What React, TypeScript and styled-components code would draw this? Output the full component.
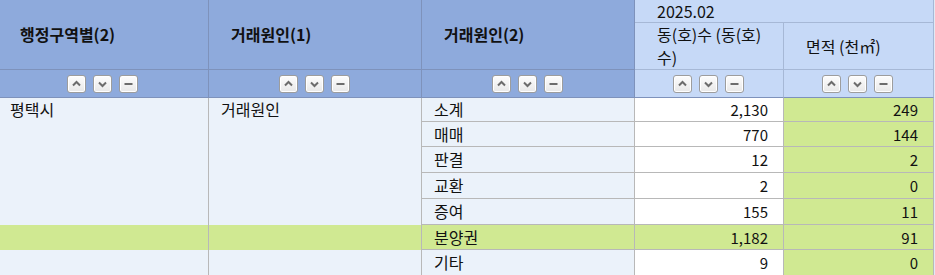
import { FC, Fragment } from "react";
import styled, { createGlobalStyle } from "styled-components";

const Colors = {
  headDark: "#8eaadc",
  headLight: "#c6d9f7",
  headLineDark: "#7e92bb",
  headLineLight: "#a6b8d6",
  bodyLight: "#ebf2fa",
  green: "#d0e992",
  white: "#ffffff",
  grid: "#b8b8b8",
  text: "#111111",
};

const GlobalStyle = createGlobalStyle`
  html, body {
    margin: 0;
    padding: 0;
    background: #e2e9f4;
    overflow: hidden;
  }
  body {
    font-family: "Noto Sans CJK KR", "Noto Sans", sans-serif;
  }
`;

const Table = styled.div`
  display: grid;
  grid-template-columns: 211px 213px 213px 149px 150px;
  grid-template-rows: 23px 47px 28px 24px 25px 26px 26px 26px 25px 26px;
  width: 936px;
  margin-left: -2px;
  font-size: 16px;
  color: ${Colors.text};
`;

const TitleCell = styled.div`
  grid-row: span 2;
  display: flex;
  align-items: center;
  padding-left: 22px;
  font-weight: 700;
  line-height: 19px;
  background: ${Colors.headDark};
  border-right: 1px solid ${Colors.headLineDark};
  border-bottom: 1px solid ${Colors.headLineDark};
`;

const PeriodCell = styled.div`
  grid-column: span 2;
  display: flex;
  align-items: center;
  padding-left: 22px;
  line-height: 19px;
  background: ${Colors.headLight};
  border-right: 1px solid ${Colors.headLineLight};
  border-bottom: 1px solid ${Colors.headLineLight};
`;

const MeasureCell = styled.div`
  display: flex;
  align-items: center;
  padding: 0 2px 0 22px;
  line-height: 23px;
  white-space: nowrap;
  background: ${Colors.headLight};
  border-right: 1px solid ${Colors.headLineLight};
  border-bottom: 1px solid ${Colors.headLineLight};
`;

const SortCell = styled.div<{ $light?: boolean }>`
  display: flex;
  align-items: center;
  justify-content: center;
  gap: 7px;
  padding-right: 2px;
  background: ${(p) => (p.$light ? Colors.headLight : Colors.headDark)};
  border-right: 1px solid ${(p) => (p.$light ? Colors.headLineLight : Colors.headLineDark)};
  border-bottom: 1px solid ${Colors.headLineDark};
`;

const SortButton = styled.button`
  width: 19px;
  height: 18px;
  padding: 0;
  display: flex;
  align-items: center;
  justify-content: center;
  border: 1px solid #9d9d9d;
  border-radius: 3px;
  background: linear-gradient(#fdfdfd, #e8e8e8);
  box-shadow: inset 0 0 0 1px #ffffff;
  color: #6c6c6c;
  cursor: pointer;
`;

const GroupCell = styled.div<{ $rows?: number; $hl?: boolean }>`
  grid-row: span ${(p) => p.$rows ?? 1};
  padding: 0 12px;
  line-height: 23px;
  background: ${(p) => (p.$hl ? Colors.green : Colors.bodyLight)};
  border-right: 1px solid ${Colors.grid};
`;

const LabelCell = styled.div<{ $hl?: boolean }>`
  display: flex;
  align-items: center;
  padding: 0 12px;
  line-height: 19px;
  background: ${(p) => (p.$hl ? Colors.green : Colors.bodyLight)};
  border-right: 1px solid ${Colors.grid};
  border-bottom: 1px solid ${Colors.grid};
`;

const NumCell = styled.div<{ $bg: string }>`
  display: flex;
  align-items: center;
  justify-content: flex-end;
  padding: 0 15px;
  font-size: 15px;
  line-height: 19px;
  background: ${(p) => p.$bg};
  border-right: 1px solid ${Colors.grid};
  border-bottom: 1px solid ${Colors.grid};
`;

type IconKind = "up" | "down" | "none";

const SortIcon: FC<{ kind: IconKind }> = ({ kind }) => (
  <svg width="17" height="16" viewBox="0 0 17 16">
    {kind === "up" && (
      <polyline points="5,9.5 8.5,6 12,9.5" fill="none" stroke="currentColor" strokeWidth="2" />
    )}
    {kind === "down" && (
      <polyline points="5,6.5 8.5,10 12,6.5" fill="none" stroke="currentColor" strokeWidth="2" />
    )}
    {kind === "none" && <rect x="4.5" y="7" width="8" height="2" fill="currentColor" />}
  </svg>
);

const SortControls: FC<{ light?: boolean }> = ({ light }) => (
  <SortCell $light={light}>
    <SortButton title="오름차순">
      <SortIcon kind="up" />
    </SortButton>
    <SortButton title="내림차순">
      <SortIcon kind="down" />
    </SortButton>
    <SortButton title="정렬 해제">
      <SortIcon kind="none" />
    </SortButton>
  </SortCell>
);

interface TradeRow {
  label: string;
  count: string;
  area: string;
  highlight?: boolean;
}

const rows: TradeRow[] = [
  { label: "소계", count: "2,130", area: "249" },
  { label: "매매", count: "770", area: "144" },
  { label: "판결", count: "12", area: "2" },
  { label: "교환", count: "2", area: "0" },
  { label: "증여", count: "155", area: "11" },
  { label: "분양권", count: "1,182", area: "91", highlight: true },
  { label: "기타", count: "9", area: "0" },
];

const GROUP_ROWS = 5;

const App: FC = () => {
  return (
    <>
      <GlobalStyle />
      <Table>
        <TitleCell>행정구역별(2)</TitleCell>
        <TitleCell>거래원인(1)</TitleCell>
        <TitleCell>거래원인(2)</TitleCell>
        <PeriodCell>2025.02</PeriodCell>
        <MeasureCell>
          동(호)수 (동(호)
          <br />수)
        </MeasureCell>
        <MeasureCell>면적 (천㎡)</MeasureCell>

        <SortControls />
        <SortControls />
        <SortControls />
        <SortControls light />
        <SortControls light />

        <GroupCell $rows={GROUP_ROWS}>평택시</GroupCell>
        <GroupCell $rows={GROUP_ROWS}>거래원인</GroupCell>
        {rows.map((r, i) => (
          <Fragment key={r.label}>
            {i >= GROUP_ROWS && (
              <>
                <GroupCell $hl={r.highlight} />
                <GroupCell $hl={r.highlight} />
              </>
            )}
            <LabelCell $hl={r.highlight}>{r.label}</LabelCell>
            <NumCell $bg={r.highlight ? Colors.green : Colors.white}>{r.count}</NumCell>
            <NumCell $bg={Colors.green}>{r.area}</NumCell>
          </Fragment>
        ))}
      </Table>
    </>
  );
};

export default App;
